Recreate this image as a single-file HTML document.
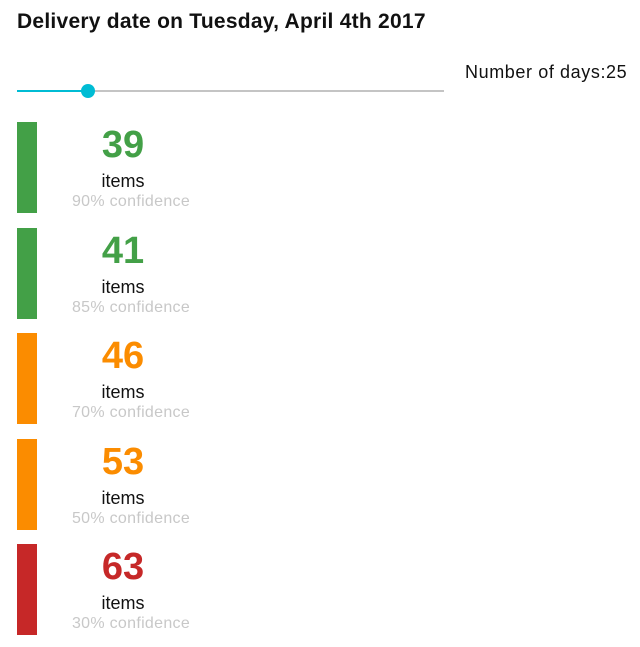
<!DOCTYPE html>
<html><head><style>
body{margin:0;width:640px;height:647px;background:#fff;font-family:"Liberation Sans",sans-serif;position:relative;overflow:hidden}
.t{position:absolute;left:17px;top:10px;font-size:21px;font-weight:bold;color:#111;letter-spacing:0.25px}
.nd{position:absolute;left:465px;top:62px;font-size:18px;color:#111;letter-spacing:0.6px}
.line{position:absolute;left:17px;top:90px;width:427px;height:2px;background:#c4c4c4}
.fill{position:absolute;left:17px;top:90px;width:71px;height:2px;background:#00bcd4}
.th{position:absolute;left:81px;top:84px;width:14px;height:14px;border-radius:50%;background:#00bcd4}
.bar{position:absolute;left:17px;width:20px;height:91px}
.n{position:absolute;left:63px;width:120px;text-align:center;font-size:38px;font-weight:bold}
.i{position:absolute;left:63px;width:120px;text-align:center;font-size:18px;color:#111}
.c{position:absolute;left:56px;width:150px;text-align:center;font-size:16px;color:#c8c8c8;letter-spacing:0.3px}
</style></head><body>
<div class="t">Delivery date on Tuesday, April 4th 2017</div>
<div class="nd">Number of days:25</div>
<div class="line"></div><div class="fill"></div><div class="th"></div>

<div class="bar" style="top:122px;background:#43a047"></div>
<div class="n" style="top:124px;color:#43a047">39</div>
<div class="i" style="top:171px">items</div>
<div class="c" style="top:193px">90% confidence</div>

<div class="bar" style="top:228px;background:#43a047"></div>
<div class="n" style="top:230px;color:#43a047">41</div>
<div class="i" style="top:277px">items</div>
<div class="c" style="top:299px">85% confidence</div>

<div class="bar" style="top:333px;background:#fb8c00"></div>
<div class="n" style="top:335px;color:#fb8c00">46</div>
<div class="i" style="top:382px">items</div>
<div class="c" style="top:404px">70% confidence</div>

<div class="bar" style="top:439px;background:#fb8c00"></div>
<div class="n" style="top:441px;color:#fb8c00">53</div>
<div class="i" style="top:488px">items</div>
<div class="c" style="top:510px">50% confidence</div>

<div class="bar" style="top:544px;background:#c62828"></div>
<div class="n" style="top:546px;color:#c62828">63</div>
<div class="i" style="top:593px">items</div>
<div class="c" style="top:615px">30% confidence</div>
</body></html>
